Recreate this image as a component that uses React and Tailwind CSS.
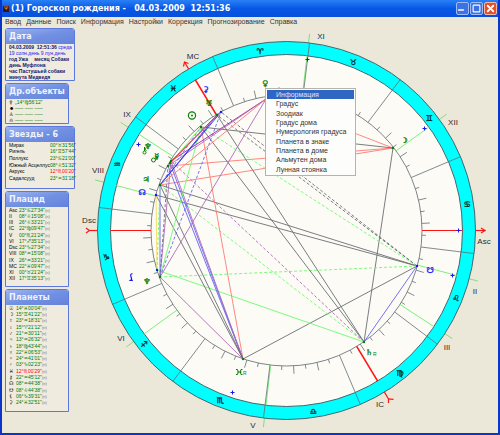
import React from "react";

import { Minus, Square, X } from "lucide-react";

const CX = 286.5;
const CY = 230.5;
const OUTER = 189;
const RING = 176;
const INNER = 135.5;

const menuItems = [
  "Ввод",
  "Данные",
  "Поиск",
  "Информация",
  "Настройки",
  "Коррекция",
  "Прогнозирование",
  "Справка",
];

const contextItems = [
  "Информация",
  "Градус",
  "Зоодиак",
  "Градус дома",
  "Нумерология градуса",
  "Планета в знаке",
  "Планета в доме",
  "Альмутен дома",
  "Лунная стоянка",
];

const objects = [
  ["⚴", "„14°♍56'12\""],
  ["☻", "––– ––– –––"],
  ["♙", "––– ––– –––"],
  ["♎", "––– ––– –––"],
];

const stars = [
  ["Мирах", "00°♉31'56\""],
  ["Ригель", "16°♊57'44\""],
  ["Поллукс", "23°♋21'00\""],
  ["Южный Асцеллус", "08°♌51'32\""],
  ["Акрукс", "12°♏00'20\"", true],
  ["Садалсууд", "23°♒31'18\""],
];

const houses = [
  ["Asc", "23°♋27'34\""],
  ["II", "08°♌15'08\""],
  ["III", "26°♌33'21\""],
  ["IC", "22°♍09'47\""],
  ["V", "00°♏21'24\""],
  ["VI", "17°♐35'13\""],
  ["Dsc", "23°♑27'34\""],
  ["VIII", "08°♒15'08\""],
  ["IX", "26°♒33'21\""],
  ["MC", "22°♓09'47\""],
  ["XI", "00°♉21'24\""],
  ["XII", "17°♊35'13\""],
];

const planets = [
  ["☉", "14°♓00'04\""],
  ["☽", "15°♊41'22\""],
  ["☿", "23°♒18'31\""],
  ["♀", "15°♈21'12\""],
  ["♂", "21°♒30'11\""],
  ["♃", "13°♒26'32\""],
  ["♄", "18°♍43'44\""],
  ["♅", "22°♓06'53\""],
  ["♆", "24°♒41'01\""],
  ["♇", "03°♑02'23\""],
  ["♓", "12°♏00'29\"", true],
  ["⚷", "22°♒45'12\""],
  ["☊", "08°♒44'38\""],
  ["☋", "08°♌44'38\""],
  ["⚸", "06°♑39'31\""],
  ["⚳", "24°♓32'51\""],
];

const signs = [
  ["♈", 260, 51],
  ["♉", 353, 62],
  ["♊", 429, 118],
  ["♋", 467, 204],
  ["♌", 456, 298],
  ["♍", 400, 373],
  ["♎", 313, 411],
  ["♏", 220, 400],
  ["♐", 144, 344],
  ["♑", 106, 257],
  ["♒", 117, 164],
  ["♓", 173, 88],
];

const houseLabels = [
  ["MC", 193, 59],
  ["IX", 127, 117],
  ["VIII", 98, 173],
  ["Dsc", 89, 223],
  ["VI", 121, 341],
  ["V", 253, 428],
  ["IC", 380, 407],
  ["III", 447, 350],
  ["II", 475, 294],
  ["Asc", 484, 244],
  ["XII", 453, 125],
  ["XI", 321, 39],
];

const markers = [
  ["♀", 265, 83, "g"],
  ["☽", 404, 140, "g"],
  ["☋", 430, 270, "b"],
  ["♄", 369, 352, "g"],
  ["♆", 147, 281, "g"],
  ["☊", 142, 192, "b"],
  ["♃", 146, 179, "g"],
  ["☿", 157, 156, "g"],
  ["♆", 148, 146, "g"],
  ["♅", 209, 103, "g"],
  ["⚳", 206, 89, "b"],
];

const crosses = [
  [307.5, 59.5],
  [424.5, 128.5],
  [458.5, 230.5],
  [452.5, 275.5],
  [232.5, 392.5],
  [138.5, 144.5],
];

const P = {
  moon: [393, 148],
  south: [417, 266],
  saturn: [364, 342],
  proserpina: [243, 359],
  pluto: [160, 277],
  lilith: [157, 270],
  north: [156, 195],
  jupiter: [160, 185],
  mars: [168, 166],
  mercury: [170, 163],
  neptune: [171, 161],
  sun: [201, 127],
  uranus: [217, 115],
  ceres: [221, 112],
  venus: [266, 99],
};

const K = "#6b6f73";
const R = "#ff7a74";
const G = "#6dfb6d";
const B = "#6464f0";
const V = "#b06ab8";

const aspects = [
  ["moon", "mars", R],
  ["moon", "jupiter", R],
  ["moon", "venus", R],
  ["moon", "sun", K],
  ["moon", "saturn", K],
  ["south", "saturn", B],
  ["south", "proserpina", K],
  ["south", "north", K],
  ["south", "jupiter", K],
  ["south", "uranus", K, true],
  ["south", "ceres", K, true],
  ["south", "sun", G, true],
  ["south", "pluto", G, true],
  ["saturn", "sun", K],
  ["saturn", "uranus", K],
  ["saturn", "neptune", V, true],
  ["saturn", "jupiter", G, true],
  ["saturn", "lilith", G],
  ["proserpina", "sun", R],
  ["proserpina", "mars", B],
  ["proserpina", "mercury", B],
  ["proserpina", "neptune", V],
  ["proserpina", "jupiter", K],
  ["proserpina", "north", K],
  ["proserpina", "pluto", V],
  ["pluto", "venus", V],
  ["pluto", "sun", G],
  ["pluto", "ceres", B, true],
  ["pluto", "neptune", V],
  ["pluto", "mars", K, true],
  ["pluto", "jupiter", B],
  ["lilith", "north", "#f6dc5a"],
  ["lilith", "jupiter", G, true],
  ["venus", "neptune", "#9a2a9a"],
  ["venus", "mars", V],
  ["venus", "jupiter", R],
  ["jupiter", "uranus", "#3030f0"],
  ["jupiter", "ceres", "#3030f0"],
  ["jupiter", "sun", B, true],
  ["mars", "sun", G],
  ["mars", "uranus", R],
  ["mercury", "uranus", "#f02020"],
  ["neptune", "ceres", V],
];

const cusps = [14.8, 33.1, 96.7, 144, 194.8, 213.1, 276.7, 324];

const polar = (r, deg) => {
  const a = (deg * Math.PI) / 180;
  return [CX + r * Math.cos(a), CY + r * Math.sin(a)];
};

function Ray({ from, to, deg, ...rest }) {
  const [x1, y1] = polar(from, deg);
  const [x2, y2] = polar(to, deg);
  return <line x1={x1} y1={y1} x2={x2} y2={y2} {...rest} />;
}

function Panel({ title, wide, children }) {
  return (
    <section
      className={`border border-[#5d78dc] rounded-t-[3px] bg-[#efecdf] ${
        wide ? "w-[70px]" : "w-[64px]"
      }`}
    >
      <h2 className="h-[15px] pl-[3px] rounded-t-[2px] bg-linear-to-br from-[#9db4f0] via-[#7391e2] to-[#6482dc] font-['DejaVu_Sans',sans-serif] text-[8px] leading-[16px] font-bold text-[#eef3ff] whitespace-nowrap">
        {title}
      </h2>
      {children}
    </section>
  );
}

function Rows({ rows, height, first, note }) {
  return (
    <table
      className={`w-full border-collapse text-[5px] leading-[3px] whitespace-nowrap ${height}`}
    >
      <tbody>
        {rows.map(([name, value, alert], i) => (
          <tr key={i}>
            <th
              scope="row"
              className={`p-0 pl-[3px] text-left font-normal text-black ${first}`}
            >
              {name}
            </th>
            <td
              className={`p-0 ${alert ? "text-[#ff0000]" : "text-[#007a00]"}`}
            >
              {value}
              {note && <span className="text-[4px] text-gray-500">(п)</span>}
            </td>
          </tr>
        ))}
      </tbody>
    </table>
  );
}

function Chart() {
  const ticks = Array.from({ length: 72 }, (_, i) => i);

  return (
    <svg
      viewBox="78 26 420 407"
      className="block w-full"
      role="img"
      aria-label="Гороскоп рождения"
    >
      {cusps.map((deg) => (
        <Ray key={deg} from={RING} to={198} deg={deg} stroke="#7fe07a" />
      ))}

      <circle cx={CX} cy={CY} r={OUTER} fill="#00ffff" stroke="#45686c" />
      <circle cx={CX} cy={CY} r={RING} fill="#fcfbf6" stroke="#45686c" />
      <circle cx={CX} cy={CY} r={INNER} fill="none" stroke="#808488" />

      {cusps.map((deg) => (
        <Ray key={deg} from={INNER} to={RING} deg={deg} stroke="#7df07a" />
      ))}

      {ticks.map((i) => {
        const length = i % 6 === 0 ? OUTER - INNER : i % 2 === 0 ? 8 : 4;
        return (
          <Ray
            key={i}
            from={INNER}
            to={INNER + length}
            deg={7 + i * 5}
            stroke="#5f6f74"
            strokeWidth="0.8"
          />
        );
      })}

      {aspects.map(([a, b, color, dashed], i) => (
        <line
          key={i}
          x1={P[a][0]}
          y1={P[a][1]}
          x2={P[b][0]}
          y2={P[b][1]}
          stroke={color}
          strokeWidth="0.9"
          strokeDasharray={dashed ? "3 2" : undefined}
        />
      ))}

      {/* angles */}
      <g stroke="#ff1414" strokeWidth="1.2" fill="none">
        <Ray from={INNER} to={RING} deg={0} />
        <Ray from={INNER} to={RING} deg={180} />
        <Ray from={INNER} to={RING} deg={238.8} strokeWidth="1.6" />
        <Ray from={INNER} to={RING} deg={58.8} strokeWidth="1.6" />
        <Ray from={OUTER} to={199} deg={0} />
        <Ray from={OUTER} to={197} deg={180} />
        <Ray from={OUTER} to={197} deg={238.8} />
        <Ray from={OUTER} to={197} deg={58.8} />
        <path d="M481 228l4 2.500l-4 2.500" />
        <path d="M86 228l3.500 2.500l-3.500 2.500" />
        <path d="M183.500 66.500l1-4.500l4 1.500" />
        <path d="M388.500 403v-4.200l5 .5" />
      </g>

      {Object.entries(P).map(([name, [x, y]]) => (
        <circle
          key={name}
          cx={x}
          cy={y}
          r="1.2"
          fill={
            ["south", "north", "lilith", "ceres"].includes(name)
              ? "#1414ff"
              : "#0a7a0a"
          }
        />
      ))}

      {crosses.map(([x, y]) => (
        <path
          key={`${x}-${y}`}
          d={`M${x - 2} ${y}h4M${x} ${y - 2}v4`}
          stroke="#1414ff"
        />
      ))}

      <g
        className="font-['DejaVu_Sans',sans-serif] text-[8px]"
        textAnchor="middle"
        strokeWidth="0.3"
      >
        {signs.map(([glyph, x, y]) => (
          <text key={glyph} x={x} y={y + 3} fill="#002426" stroke="#002426">
            {glyph}
          </text>
        ))}
        {markers.map(([glyph, x, y, tone], i) => (
          <text
            key={i}
            x={x}
            y={y + 3}
            fill={tone === "g" ? "#0a800a" : "#1414ff"}
            stroke={tone === "g" ? "#0a800a" : "#1414ff"}
          >
            {glyph}
          </text>
        ))}
      </g>

      {/* sun */}
      <circle
        cx="192"
        cy="115.500"
        r="3.600"
        fill="none"
        stroke="#0a800a"
        strokeWidth="1.200"
      />
      <circle cx="192" cy="115.500" r="1" fill="#0a800a" />

      {/* mars and chiron */}
      <g fill="none" stroke="#0a800a">
        <circle cx="153.500" cy="160" r="2" />
        <path d="M155 158.500l2.500-2M155.500 156.500h2v2" />
        <circle cx="144.500" cy="152.500" r="1.500" />
        <path d="M144.500 151v-4M144.500 149l2-1.500M144.500 149l2 1.500" />
      </g>

      {/* lilith */}
      <path
        d="M132.500 273.500q-2.500 .5-1.500 3.200q1.200 2.800-.2 3.600h2"
        fill="none"
        stroke="#1414ff"
        strokeWidth="1.200"
      />

      {/* proserpina */}
      <path
        d="M236 369.500h1.500q1.500 2.500 0 5h-1.500M242.500 369.500h-1.500q-1.500 2.500 0 5h1.500M237.500 372h4"
        fill="none"
        stroke="#0a800a"
      />
      <g
        className="font-['Liberation_Sans',sans-serif] text-[5px]"
        fill="#0a800a"
      >
        <text x="243" y="375">
          R
        </text>
        <text x="373" y="356">
          R
        </text>
      </g>

      <g
        className="font-['Liberation_Sans',sans-serif] text-[8px]"
        textAnchor="middle"
        fill="#2c2c2c"
      >
        {houseLabels.map(([label, x, y]) => (
          <text key={label} x={x} y={y}>
            {label}
          </text>
        ))}
      </g>
    </svg>
  );
}

export default function App() {
  return (
    <div className="flex min-h-screen flex-col border-x-2 border-b-2 border-[#0a35c8] bg-[#ebe8da] font-['Liberation_Sans','DejaVu_Sans',sans-serif]">
      <header className="flex h-[17px] items-center bg-linear-to-b from-[#2a80f5] via-[#0757e6] to-[#0650dc] px-px">
        <span className="mr-[2px] flex h-[6px] w-[6px] items-center justify-center bg-[#3a1414] text-[5px] leading-none text-[#ff9a5a]">
          Ψ
        </span>
        <h1 className="flex-1 whitespace-pre font-['DejaVu_Sans',sans-serif] text-[8px] leading-[17px] font-bold text-white">
          {"(1) Гороскоп рождения -   04.03.2009  12:51:36"}
        </h1>
        <div className="flex gap-px">
          <button
            aria-label="Свернуть"
            className="flex h-[13px] w-[13px] items-end justify-start rounded-[2px] border border-[#9dbcf5] bg-[#3c72e6] text-white"
          >
            <Minus size={8} strokeWidth={5} />
          </button>
          <button
            aria-label="Развернуть"
            className="flex h-[13px] w-[13px] items-center justify-center rounded-[2px] border border-[#9dbcf5] bg-[#3c72e6] text-white"
          >
            <Square size={9} strokeWidth={3} />
          </button>
          <button
            aria-label="Закрыть"
            className="flex h-[13px] w-[13px] items-center justify-center rounded-[2px] border border-[#f3b8a8] bg-[#e2512e] text-white"
          >
            <X size={11} strokeWidth={4} />
          </button>
        </div>
      </header>

      <nav className="flex h-[9px] gap-[5px] pl-[3px] text-[7px] leading-[8px] text-[#333]">
        {menuItems.map((item) => (
          <button key={item}>{item}</button>
        ))}
      </nav>

      <main className="flex flex-1">
        <aside className="flex w-[76px] shrink-0 flex-col gap-[2px] pt-[2px] pl-[3px]">
          <Panel title="Дата" wide>
            <div className="pl-[3px] text-[5px] leading-[6px] font-bold whitespace-nowrap text-[#14146e]">
              <p>
                04.03.2009&nbsp; 12:51:36{" "}
                <span className="font-normal text-[#2020ff]">среда</span>
              </p>
              <p className="font-normal text-[#2020ff]">
                19 солн.день 9 лун.день
              </p>
              <p className="flex justify-between pr-[5px]">
                <span>год Ужа</span>
                <span>месяц Собаки</span>
              </p>
              <p>день Муфлона</p>
              <p>час Пастушьей собаки</p>
              <p>минута Медведя</p>
            </div>
          </Panel>
          <Panel title="Др.объекты">
            <Rows rows={objects} height="h-[24px]" first="w-[9px]" />
          </Panel>
          <Panel title="Звезды - 6" wide>
            <Rows rows={stars} height="mb-[6px] h-[40px]" first="w-[38px]" />
          </Panel>
          <Panel title="Плацид">
            <Rows
              rows={houses}
              height="mb-[4px] h-[75px]"
              first="w-[13px]"
              note
            />
          </Panel>
          <Panel title="Планеты">
            <Rows
              rows={planets}
              height="mb-[5px] h-[101px]"
              first="w-[10px]"
              note
            />
          </Panel>
        </aside>

        <div className="relative min-w-0 flex-1">
          <Chart />
          <div
            role="menu"
            className="absolute top-[62px] left-[187px] grid h-[88px] w-[91px] auto-rows-fr border border-[#b4b4ac] bg-[#fdfdfb] p-px text-[7px] text-[#333]"
          >
            {contextItems.map((item, i) => (
              <button
                key={item}
                role="menuitem"
                className={`pl-[9px] text-left leading-[9px] whitespace-nowrap ${
                  i === 0 ? "bg-[#2f66c4] text-[#d8e6ff]" : ""
                }`}
              >
                {item}
              </button>
            ))}
          </div>
        </div>
      </main>
    </div>
  );
}
